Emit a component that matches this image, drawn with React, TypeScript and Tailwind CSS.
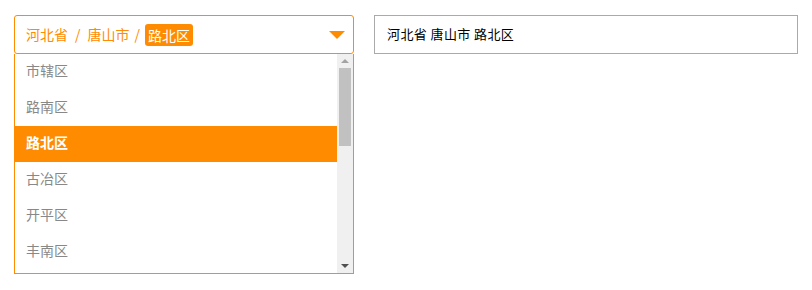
const districts = ['市辖区', '路南区', '路北区', '古冶区', '开平区', '丰南区']

export default function App() {
  const selected = '路北区'

  return (
    <div
      className="flex items-start gap-[20px] pt-[15px] pl-[14px] bg-white min-h-[290px]"
      style={{ fontFamily: '"Noto Sans CJK SC", "Noto Sans", sans-serif' }}
    >
      <div className="w-[340px]">
        {/* cascader trigger */}
        <div className="h-[39px] border border-[#ff8c00] rounded-[3px] flex items-center pl-[11px] pr-[8px] text-[14px] text-[#ff8c00]">
          <span>河北省</span>
          <span className="mx-[7px]">/</span>
          <span>唐山市</span>
          <span className="mx-[5px]">/</span>
          <span className="bg-[#ff8c00] text-white rounded-[3px] px-[3px] leading-[22px]">路北区</span>
          <svg className="ml-auto" width="16" height="8" viewBox="0 0 16 8">
            <path d="M0 0 H16 L8 8 Z" fill="#ff8c00" />
          </svg>
        </div>

        {/* dropdown list */}
        <div className="h-[220px] border border-t-0 border-[#ff8c00] flex">
          <div className="flex-1 overflow-hidden">
            {districts.map((d) => (
              <div
                key={d}
                className={
                  d === selected
                    ? 'h-[36px] flex items-center pl-[11px] pb-[3px] text-[14px] font-bold text-white bg-[#ff8c00]'
                    : 'h-[36px] flex items-center pl-[11px] pb-[3px] text-[14px] text-[#888]'
                }
              >
                {d}
              </div>
            ))}
          </div>
          {/* scrollbar */}
          <div className="w-[16px] bg-[#f0f0f0] flex flex-col items-center">
            <div className="h-[14px] flex items-center justify-center">
              <svg width="8" height="4" viewBox="0 0 8 4">
                <path d="M0 4 L4 0 L8 4 Z" fill="#a3a3a3" />
              </svg>
            </div>
            <div className="w-[12px] h-[78px] bg-[#c1c1c1]" />
            <div className="mt-auto h-[14px] flex items-center justify-center">
              <svg width="8" height="4" viewBox="0 0 8 4">
                <path d="M0 0 H8 L4 4 Z" fill="#505050" />
              </svg>
            </div>
          </div>
        </div>
      </div>

      <div className="w-[424px] h-[39px] border border-[#aaa] flex items-center pl-[12px] pb-[1px] text-[13px] tracking-[0.4px] text-black">
        河北省 唐山市 路北区
      </div>
    </div>
  )
}
